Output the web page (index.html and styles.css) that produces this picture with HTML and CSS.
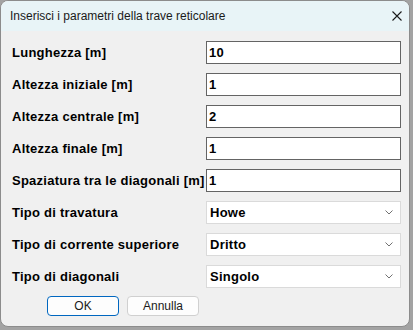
FILE: index.html
```html
<!DOCTYPE html>
<html>
<head>
<meta charset="utf-8">
<link rel="stylesheet" href="styles.css">
</head>
<body>
<div class="window">
  <div class="titlebar">
    <span class="title">Inserisci i parametri della trave reticolare</span>
    <svg class="close" width="10" height="10" viewBox="0 0 10 10"><path d="M0.5 0.5 L9.5 9.5 M9.5 0.5 L0.5 9.5" stroke="#1a1a1a" stroke-width="1.1" fill="none"/></svg>
  </div>
  <div class="content">
    <div class="form">
      <label class="lbl">Lunghezza [m]</label>
      <div class="field">10</div>
      <label class="lbl">Altezza iniziale [m]</label>
      <div class="field">1</div>
      <label class="lbl">Altezza centrale [m]</label>
      <div class="field">2</div>
      <label class="lbl">Altezza finale [m]</label>
      <div class="field">1</div>
      <label class="lbl">Spaziatura tra le diagonali [m]</label>
      <div class="field">1</div>
      <label class="lbl">Tipo di travatura</label>
      <div class="combo"><span>Howe</span><svg width="8" height="5" viewBox="0 0 8 5"><path d="M0.5 0.5 L4 4 L7.5 0.5" stroke="#707070" stroke-width="1" fill="none"/></svg></div>
      <label class="lbl">Tipo di corrente superiore</label>
      <div class="combo"><span>Dritto</span><svg width="8" height="5" viewBox="0 0 8 5"><path d="M0.5 0.5 L4 4 L7.5 0.5" stroke="#707070" stroke-width="1" fill="none"/></svg></div>
      <label class="lbl">Tipo di diagonali</label>
      <div class="combo"><span>Singolo</span><svg width="8" height="5" viewBox="0 0 8 5"><path d="M0.5 0.5 L4 4 L7.5 0.5" stroke="#707070" stroke-width="1" fill="none"/></svg></div>
    </div>
    <div class="buttons">
      <button class="btn default">OK</button>
      <button class="btn">Annulla</button>
    </div>
  </div>
</div>
</body>
</html>
```

FILE: styles.css
```css
html, body {
  margin: 0;
  padding: 0;
}
body {
  background: #a3a3a3;
  width: 413px;
  height: 330px;
  overflow: hidden;
}
.window {
  box-sizing: border-box;
  width: 410px;
  height: 327px;
  border: 1px solid #8c8c8c;
  border-radius: 8px;
  background: #f0f0f0;
  overflow: hidden;
  display: flex;
  flex-direction: column;
}
.titlebar {
  height: 30px;
  background: #e8f4f7;
  display: flex;
  align-items: center;
  justify-content: space-between;
  padding: 0 7px 0 9px;
  flex: none;
}
.title {
  font-family: "Liberation Sans", sans-serif;
  font-size: 12px;
  color: #1a1a1a;
}
.close {
  display: block;
}
.content {
  padding: 10px 0 0 11px;
}
.form {
  display: grid;
  grid-template-columns: 194px 195px;
  grid-auto-rows: 23px;
  row-gap: 9px;
}
.lbl {
  font-family: "Liberation Sans", sans-serif;
  font-weight: bold;
  font-size: 13px;
  letter-spacing: 0.25px;
  color: #000;
  display: flex;
  align-items: center;
  white-space: nowrap;
}
.field {
  box-sizing: border-box;
  border: 1px solid #646464;
  background: #fff;
  font-family: "Liberation Sans", sans-serif;
  font-weight: bold;
  font-size: 13px;
  letter-spacing: 0.25px;
  color: #000;
  display: flex;
  align-items: center;
  padding-left: 2px;
}
.combo {
  box-sizing: border-box;
  border: 1px solid #dadada;
  background: #fff;
  font-family: "Liberation Sans", sans-serif;
  font-weight: bold;
  font-size: 13px;
  letter-spacing: 0.25px;
  color: #000;
  display: flex;
  align-items: center;
  justify-content: space-between;
  padding: 0 7px 0 3px;
}
.combo svg {
  display: block;
}
.buttons {
  display: flex;
  gap: 8px;
  margin: 8px 0 0 35px;
}
.btn {
  box-sizing: border-box;
  width: 72px;
  height: 20px;
  border: 1px solid #d0d0d0;
  border-radius: 4px;
  background: #fdfdfd;
  font-family: "Liberation Sans", sans-serif;
  font-size: 12px;
  color: #1a1a1a;
  padding: 0;
  line-height: 18px;
}
.btn.default {
  border-color: #0067c0;
}
```
